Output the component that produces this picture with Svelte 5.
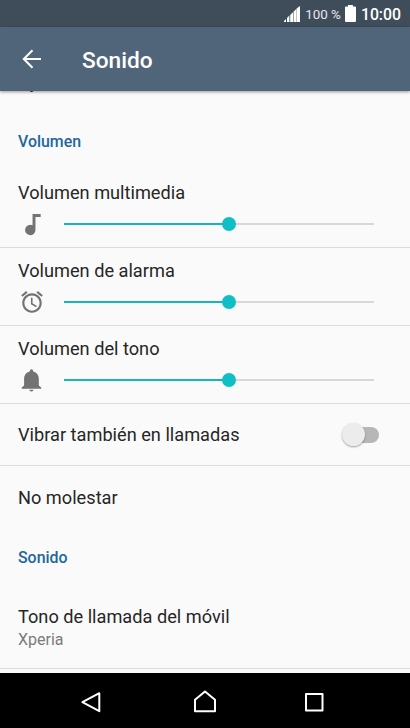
<script>
  let volumes = [
    { label: 'Volumen multimedia', icon: 'note', value: 53.3 },
    { label: 'Volumen de alarma', icon: 'alarm', value: 53.3 },
    { label: 'Volumen del tono', icon: 'bell', value: 53.3 }
  ]

  let vibrate = false
</script>

<div class="screen">
  <div class="status-bar">
    <svg class="signal" width="16" height="16" viewBox="0 0 16 16">
      <path d="M0 16v-1l2-2v3zM3 16v-4l2.4-2.4V16zM6.2 16V9L9 6.2v9.8zM9.5 16V5.8l2.8-2.8v13zM12.6 16V2.5L16 0v16z" fill="#fff" />
    </svg>
    <span class="percent">100 %</span>
    <svg class="battery" width="11" height="17" viewBox="0 0 11 17">
      <path d="M3 0h5v1.5h2a1 1 0 0 1 1 1V16a1 1 0 0 1-1 1H1a1 1 0 0 1-1-1V2.5a1 1 0 0 1 1-1h2z" fill="#fff" />
    </svg>
    <span class="clock">10:00</span>
  </div>

  <header class="app-bar">
    <svg width="20" height="20" viewBox="0 0 20 20" fill="none" stroke="#fff" stroke-width="2">
      <path d="M19 10H2M10.5 1.3L1.8 10l8.7 8.7" />
    </svg>
    <h1>Sonido</h1>
  </header>

  <main class="content">
    <div class="row scrolled">Ayuda</div>

    <h2>Volumen</h2>

    {#each volumes as volume}
      <div class="volume">
        <div class="title">{volume.label}</div>
        <div class="slider-line">
          <svg class="icon" width="26" height="26" viewBox="0 0 24 24" fill="#737373">
            {#if volume.icon === 'note'}
              <path d="M12.5 2.7v10.5a4.8 4.8 0 1 0 2.7 4.3V5.6H20V2.7z" />
            {:else if volume.icon === 'alarm'}
              <path d="M22 5.72l-4.6-3.86-1.29 1.53 4.6 3.86L22 5.72zM7.88 3.39L6.6 1.86 2 5.71l1.29 1.53 4.59-3.85zM12.5 8H11v6l4.75 2.85.75-1.23-4-2.37V8zM12 4c-4.97 0-9 4.03-9 9s4.02 9 9 9c4.97 0 9-4.03 9-9s-4.03-9-9-9zm0 16c-3.87 0-7-3.13-7-7s3.13-7 7-7 7 3.13 7 7-3.13 7-7 7z" />
            {:else}
              <path d="M11.5 22.5c1.1 0 2-.7 2-1.5h-4c0 .8.9 1.500 2 1.500zM18.300 17v-6c0-3.300-1.800-6-5.200-6.800V3.600a1.600 1.600 0 0 0-3.200 0v.6C6.500 5 4.700 7.700 4.700 11v6l-2.200 2v1h18v-1z" />
            {/if}
          </svg>
          <div class="slider">
            <div class="fill" style="width: {volume.value}%"></div>
            <div class="thumb" style="left: {volume.value}%"></div>
          </div>
        </div>
      </div>
    {/each}

    <div class="row bordered">
      <span>Vibrar también en llamadas</span>
      <div class="switch" class:on={vibrate}>
        <div class="knob"></div>
      </div>
    </div>

    <div class="row">No molestar</div>

    <h2 class="sound-heading">Sonido</h2>

    <div class="ringtone">
      <div class="title">Tono de llamada del móvil</div>
      <div class="summary">Xperia</div>
    </div>
  </main>

  <nav class="nav-bar">
    <svg width="24" height="24" viewBox="0 0 24 24">
      <path d="M20.3 3.2v18L3.4 12.2z" />
    </svg>
    <svg class="home" width="24" height="24" viewBox="0 0 24 24">
      <path d="M2 21.2V9.8L12 1.6l10 8.2v11.4z" />
    </svg>
    <svg width="24" height="24" viewBox="0 0 24 24">
      <path d="M4 4h16.5v16.5H4z" />
    </svg>
  </nav>
</div>

<style>
  :global(body) {
    margin: 0;
  }

  .screen {
    width: 410px;
    height: 728px;
    display: flex;
    flex-direction: column;
    overflow: hidden;
    background: #fafafa;
    color: #262626;
    font-family: Roboto, "Liberation Sans", sans-serif;
    font-size: 18.2px;
  }

  .status-bar {
    height: 27px;
    flex: none;
    box-sizing: border-box;
    display: flex;
    align-items: center;
    justify-content: flex-end;
    padding: 1px 9px 0 0;
    background: #3f4d5b;
    color: #fff;
  }

  .percent {
    margin: 0 4px 0 5px;
    font-size: 13.4px;
    color: #e4e8eb;
  }

  .battery {
    margin-top: -1px;
  }

  .clock {
    margin-left: 5px;
    font-size: 15.8px;
    font-weight: 500;
  }

  .app-bar {
    height: 64px;
    flex: none;
    box-sizing: border-box;
    display: flex;
    align-items: center;
    padding-left: 22px;
    background: #506579;
    color: #fff;
    box-shadow: 0 1px 3px rgba(0, 0, 0, 0.4);
  }

  h1 {
    margin: 2px 0 0 40px;
    font-size: 22.7px;
    font-weight: 500;
  }

  .content {
    flex: 1;
    min-height: 0;
    overflow: hidden;
  }

  /* Only the bottom edge of this row is left under the app bar */
  .row.scrolled {
    height: 22px;
    margin-top: -22px;
    align-items: flex-start;
    line-height: 26px;
  }

  h2 {
    height: 79px;
    margin: 0;
    padding: 0 18px;
    box-sizing: border-box;
    font-size: 15.9px;
    line-height: 101px;
    font-weight: 500;
    color: #22679c;
  }

  .volume {
    height: 78px;
    box-sizing: border-box;
    padding: 11px 36px 0 18px;
    border-bottom: 1px solid #dcdcdc;
  }

  .title {
    line-height: 23px;
  }

  .slider-line {
    display: flex;
    align-items: center;
    height: 40px;
  }

  .icon {
    flex: none;
    margin: 0 19px 0 1px;
  }

  .slider {
    position: relative;
    flex: 1;
    height: 2px;
    background: #d8d8d8;
  }

  .fill {
    height: 2px;
    background: #18b5bd;
  }

  .thumb {
    position: absolute;
    top: -6px;
    width: 14px;
    height: 14px;
    margin-left: -7px;
    border-radius: 50%;
    background: #10bfc5;
  }

  .row {
    display: flex;
    align-items: center;
    justify-content: space-between;
    height: 62px;
    box-sizing: border-box;
    padding: 0 31px 0 18px;
  }

  .bordered {
    border-bottom: 1px solid #dcdcdc;
  }

  .switch {
    position: relative;
    width: 36px;
    height: 16px;
    border-radius: 8px;
    background: #b7b7b7;
  }

  .knob {
    position: absolute;
    left: -1px;
    top: -4px;
    width: 23px;
    height: 23px;
    border-radius: 50%;
    background: #ececec;
    box-shadow: 0 1px 2px rgba(0, 0, 0, 0.35);
  }

  .switch.on .knob {
    left: 14px;
    background: #10bfc5;
  }

  h2.sound-heading {
    height: 59px;
    line-height: 60px;
  }

  .ringtone {
    height: 82px;
    box-sizing: border-box;
    padding: 18px 18px 0;
    border-bottom: 1px solid #dcdcdc;
  }

  .summary {
    font-size: 16px;
    line-height: 23px;
    color: #7b7b7b;
  }

  .nav-bar {
    height: 55px;
    flex: none;
    box-sizing: border-box;
    display: flex;
    align-items: center;
    justify-content: space-between;
    padding: 3px 84px 0 79px;
    background: #000;
  }

  .nav-bar path {
    fill: none;
    stroke: #fff;
    stroke-width: 2;
    stroke-linejoin: round;
  }

  .home {
    margin-left: 5px;
  }
</style>
